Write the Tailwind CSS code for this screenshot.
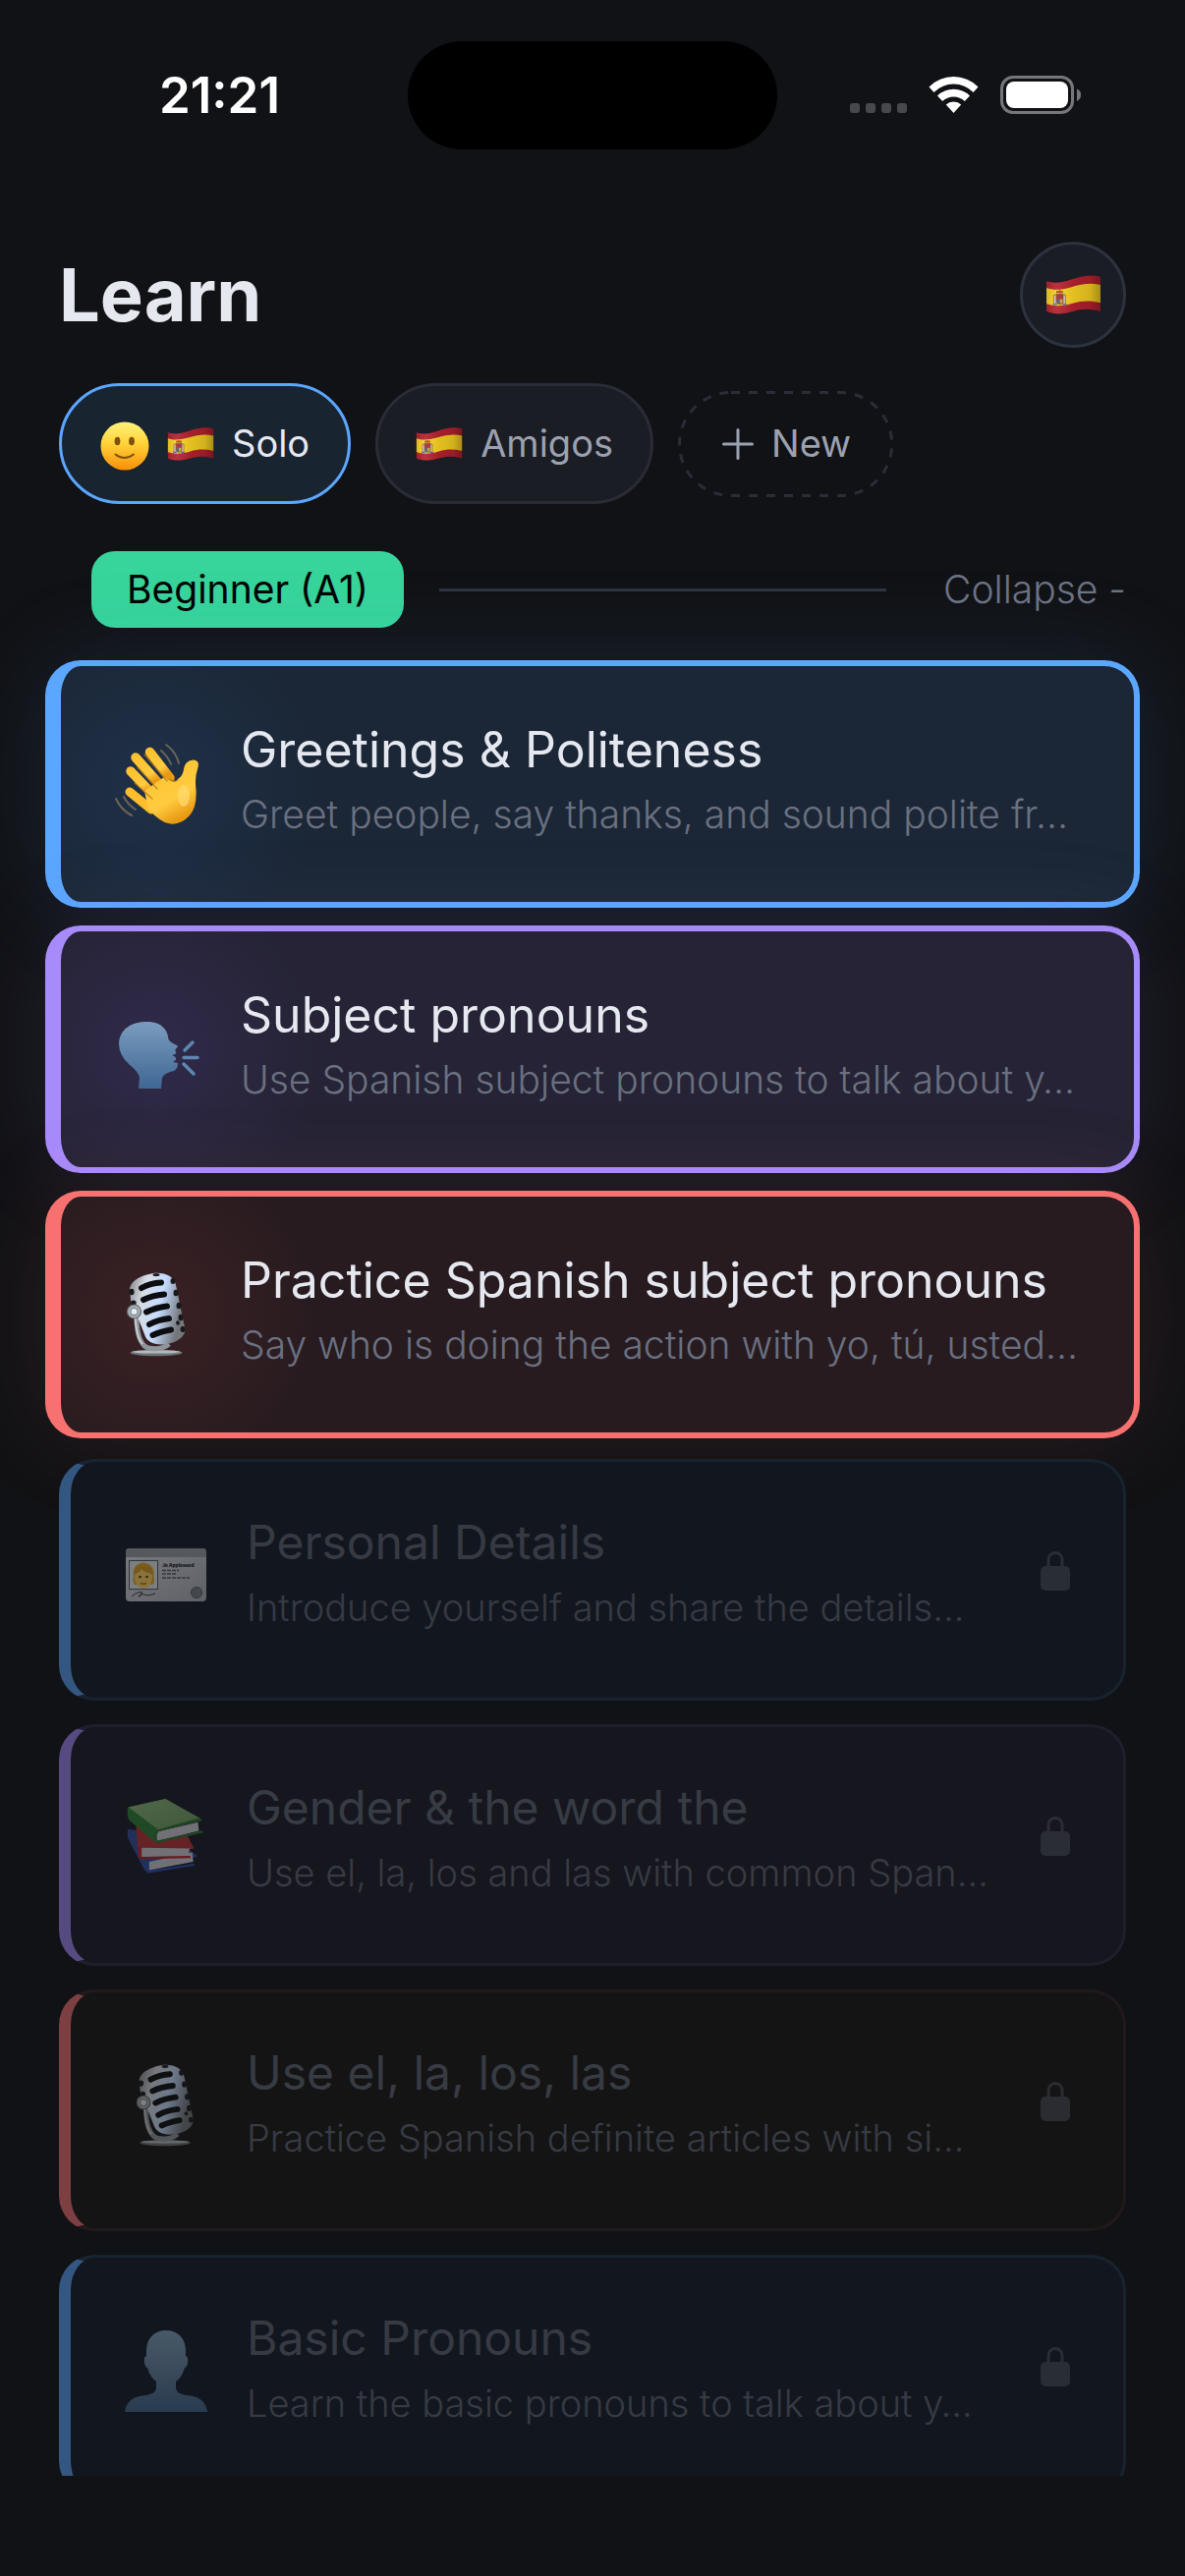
<!DOCTYPE html>
<html lang="en">
<head>
<meta charset="utf-8">
<meta name="viewport" content="width=device-width, initial-scale=1">
<title>Learn</title>
<script src="https://cdn.jsdelivr.net/npm/@tailwindcss/browser@4"></script>
</head>
<body class="flex h-screen flex-col bg-[#111215] pb-[102px] font-[Inter,sans-serif] text-[#e6e8f0]">

<!-- Shared artwork -->
<svg width="0" height="0" class="absolute" aria-hidden="true">
  <defs>
    <linearGradient id="face" x1="0" y1="0" x2="0" y2="1"><stop offset="0" stop-color="#fff27a"/><stop offset=".45" stop-color="#ffd338"/><stop offset="1" stop-color="#f88f08"/></linearGradient>
    <linearGradient id="fold" x1="0" y1="0" x2="1" y2="0"><stop offset="0" stop-color="#000" stop-opacity=".12"/><stop offset=".2" stop-color="#fff" stop-opacity=".08"/><stop offset=".5" stop-color="#000" stop-opacity=".08"/><stop offset=".8" stop-color="#000" stop-opacity=".14"/><stop offset="1" stop-color="#000" stop-opacity=".32"/></linearGradient>
    <linearGradient id="hand" x1="0" y1="0" x2=".5" y2="1"><stop offset="0" stop-color="#ffc22e"/><stop offset=".7" stop-color="#ffcb40"/><stop offset="1" stop-color="#e89a13"/></linearGradient>
    <linearGradient id="blue" x1="0" y1="0" x2="0" y2="1"><stop offset="0" stop-color="#7a9cbe"/><stop offset="1" stop-color="#3f6794"/></linearGradient>
    <linearGradient id="bust" x1="0" y1="0" x2="0" y2="1"><stop offset="0" stop-color="#7d9cb0"/><stop offset=".5" stop-color="#647d96"/><stop offset="1" stop-color="#3f5f80"/></linearGradient>
    <linearGradient id="metal" x1="0" y1="0" x2="1" y2=".3"><stop offset="0" stop-color="#7d8388"/><stop offset=".3" stop-color="#d8dde2"/><stop offset=".62" stop-color="#c5dcff"/><stop offset="1" stop-color="#73777c"/></linearGradient>
    <linearGradient id="card" x1="0" y1="0" x2="1" y2="1"><stop offset="0" stop-color="#dedede"/><stop offset="1" stop-color="#a9a9ab"/></linearGradient>
    <linearGradient id="green" x1="0" y1="0" x2="1" y2="1"><stop offset="0" stop-color="#8bb877"/><stop offset="1" stop-color="#6a9a52"/></linearGradient>
    <clipPath id="flagshape"><path d="M0 5C7 7.500 13 6.500 21 4C31 .5 39 -.8 47 1.500V31.500C39 29 31 29 23 31.500C15 34 7 34.500 0 31.500Z"/></clipPath>
  </defs>
  <symbol id="flag" viewBox="0 0 47 34">
    <g clip-path="url(#flagshape)">
      <rect width="47" height="34" fill="#b3212f"/>
      <path d="M0 11C7 13.500 13 12.500 21 10.500C31 7.500 39 6.500 47 8.500V24C39 22 31 22 23 24.500C15 27 7 27.500 0 25Z" fill="#f6cf22"/>
      <path d="M6.500 17h2v8h-2zM14.500 17h2v8h-2z" fill="#e3d8c8" stroke="#6b4a3a" stroke-width=".6"/>
      <path d="M8.800 16.500h5.400v6q0 2.500-2.700 2.800-2.700-.3-2.700-2.800z" fill="#b02a35" stroke="#7a3b1e" stroke-width=".7"/>
      <path d="M11.600 20.800h2.400v1.800q0 2-2.400 2.400z" fill="#cfa83a"/>
      <path d="M8.800 20.800h2.700v4q-2.700-.5-2.700-2.500z" fill="#4f5a86"/>
      <path d="M8.500 15.500l.3-2.200 1.500.7 1.200-1.500 1.200 1.500 1.500-.7.300 2.200z" fill="#a3472a"/>
      <path d="M5.500 25.500h4M13.500 25.500h4" stroke="#5868a0" stroke-width="1"/>
      <rect width="47" height="34" fill="url(#fold)"/>
    </g>
  </symbol>
  <symbol id="mic" viewBox="0 0 60 86">
    <ellipse cx="29" cy="82" rx="26.500" ry="3.200" fill="#6c7376"/>
    <ellipse cx="29" cy="81" rx="25" ry="1.600" fill="#b4bbbd"/>
    <path d="M8.500 40C9 56 10 68 17 75C22 79 36 79 42 73" fill="none" stroke="#8d959b" stroke-width="5"/>
    <path d="M7.500 42C8 58 10 68 15 73" fill="none" stroke="#d4dade" stroke-width="1.500"/>
    <path d="M2 16C4 8 14 3 26 1C38 0 47 4 49 13L58 56C60 64 52 71 40 73C28 75 19 71 17 63L3 28Z" fill="url(#metal)"/>
    <g stroke="#0c0d10" stroke-width="6" stroke-linecap="round" fill="none">
      <path d="M14 16Q23 11 34 10.500"/><path d="M16 28Q25 23.500 37 22.500"/><path d="M19 40.500Q28 36 40 34.500"/><path d="M22 53Q30 48.500 42 47"/><path d="M25.500 64Q33 60.500 44 58.500"/>
    </g>
    <g fill="#17191c">
      <ellipse cx="4" cy="20" rx="2.600" ry="3.200"/><ellipse cx="6" cy="31" rx="2.600" ry="2.600"/><ellipse cx="29" cy="2.500" rx="3.500" ry="1.500"/><ellipse cx="46" cy="9" rx="2.500" ry="3"/><ellipse cx="49" cy="21" rx="2.500" ry="3.200"/><ellipse cx="52" cy="34" rx="2.500" ry="3.200"/><ellipse cx="54" cy="46" rx="2.500" ry="3.200"/><ellipse cx="56" cy="58" rx="2.500" ry="3"/><ellipse cx="51" cy="51.500" rx="1.800" ry="2.200"/>
    </g>
    <circle cx="6.500" cy="40" r="7" fill="#aab2b8" stroke="#5f676d" stroke-width="1.200"/>
    <circle cx="6.500" cy="40" r="3.600" fill="#e7ecf0" stroke="#7d868c" stroke-width="1.200"/>
  </symbol>
  <symbol id="lock" viewBox="0 0 30 42">
    <path d="M8 18V9.500a7 7 0 0 1 14 0V18" fill="none" stroke="currentColor" stroke-width="3"/>
    <rect x="0" y="16" width="30" height="25" rx="5" fill="currentColor"/>
  </symbol>
</svg>

<!-- Status bar -->
<header class="grid shrink-0 grid-cols-[1fr_376px_1fr] items-center pt-[42px]">
  <p class="pl-8 text-center text-[51px] leading-[60px] font-semibold text-white">21:21</p>
  <div class="h-[110px] rounded-full bg-black"></div>
  <div class="flex justify-center pr-8">
    <svg class="h-[40px] w-[236px]" viewBox="865 78 236 40" aria-hidden="true">
      <g fill="#47484b"><rect x="865" y="106" width="10" height="10" rx="3"/><rect x="881" y="106" width="10" height="10" rx="3"/><rect x="897" y="106" width="10" height="10" rx="3"/><rect x="913" y="106" width="10" height="10" rx="3"/></g>
      <g fill="#fff">
        <path d="M945.500 89.500Q956 79 970.500 79Q985 79 995.500 89.500L990.500 95Q982 86.500 970.500 86.500Q959 86.500 950.500 95Z"/>
        <path d="M954 98.500Q961 91.800 970.500 91.800Q980 91.800 987 98.500L981.800 104Q977 99.500 970.500 99.500Q964 99.500 959.200 104Z"/>
        <path d="M962.800 107.500Q966 104.500 970.500 104.500Q975 104.500 978.200 107.500L970.500 116Z"/>
      </g>
      <rect x="1019.500" y="79.500" width="72" height="36" rx="11.500" fill="none" stroke="#76777a" stroke-width="3"/>
      <rect x="1024" y="84" width="63" height="27" rx="8" fill="#fff"/>
      <path d="M1096 91.500Q1100 93 1100 97.500T1096 104Z" fill="#76777a"/>
    </svg>
  </div>
</header>

<main class="min-h-0 flex-1 overflow-y-auto px-[60px] pt-[94px] [scrollbar-width:none]">
  <div class="flex h-[108px] items-center justify-between">
    <h1 class="text-[74px] leading-[90px] font-bold">Learn</h1>
    <button type="button" aria-label="Spanish" class="grid size-[108px] place-items-center rounded-full border-3 border-[#2d3240] bg-[#1a1d24]">
      <svg class="h-[40px] w-[55px]"><use href="#flag"/></svg>
    </button>
  </div>

  <nav class="mt-9 flex items-center gap-[25px] text-[38px] font-normal" aria-label="Courses">
    <button type="button" class="flex h-[123px] items-center gap-[18px] rounded-full border-3 border-[#5ba6ff] bg-[#192431] px-[39px]">
      <svg class="mt-1 size-[50px]" viewBox="0 0 50 50" aria-hidden="true">
        <circle cx="25" cy="25" r="24.500" fill="url(#face)"/>
        <ellipse cx="17.500" cy="20" rx="2.900" ry="4.300" fill="#80500c"/><ellipse cx="32" cy="20" rx="2.900" ry="4.300" fill="#80500c"/>
        <path d="M15.500 33.500Q24.500 40.500 34 33.500" fill="none" stroke="#80500c" stroke-width="2" stroke-linecap="round"/>
      </svg>
      <svg class="h-[34px] w-[48px]" aria-hidden="true"><use href="#flag"/></svg>
      Solo
    </button>
    <button type="button" class="flex h-[123px] items-center gap-[18px] rounded-full border-3 border-[#292c37] bg-[#1a1d24] px-[38px] text-[#9ba1b0]">
      <svg class="h-[34px] w-[48px]" aria-hidden="true"><use href="#flag"/></svg>
      Amigos
    </button>
    <button type="button" class="relative flex h-[108px] items-center gap-4 px-[43px] text-[#9ba1b0]">
      <svg class="absolute inset-0 size-full" aria-hidden="true"><rect x="1.500" y="1.500" width="100%" height="105" rx="52.500" class="w-[calc(100%-3px)]" fill="none" stroke="#2a2d38" stroke-width="3" stroke-dasharray="9 9"/></svg>
      <svg class="size-9" viewBox="0 0 36 36" fill="none" stroke="currentColor" stroke-width="3" stroke-linecap="round" aria-hidden="true"><path d="M18 3.500v29M3.500 18h29"/></svg>
      New
    </button>
  </nav>

  <section class="mt-12">
    <div class="flex items-center pl-[33px]">
      <h2 class="rounded-3xl bg-[#37d49b] px-9 text-[39px] leading-[78px] font-normal text-black">Beginner (A1)</h2>
      <div class="mr-[58px] ml-9 h-[3px] flex-1 bg-[#2f3441]"></div>
      <button type="button" class="text-[39px] leading-[78px] font-light text-[#6d7383]">Collapse -</button>
    </div>

    <ul class="mt-9 flex flex-col gap-6">
      <li class="-mx-[14px] -my-[3px]">
        <button type="button" class="flex h-[252px] w-full items-center gap-[42px] rounded-[36px] border-6 border-l-16 border-[#5ba6ff] bg-[#1b2736] bg-[radial-gradient(circle_at_95px_120px,#1f3049,transparent_170px)] pl-[55px] text-left shadow-[0_0_100px_#5ba6ff20]">
          <svg class="size-[86px] shrink-0" viewBox="0 0 86 86" aria-hidden="true">
            <g fill="none" stroke="#6b6355" stroke-width="2" stroke-linecap="round"><path d="M52 3Q62 10 65 22M47 9Q54 15 57 23M1 58Q6 69 17 75M9 56Q13 64 21 69"/></g>
            <g fill="none" stroke="url(#hand)" stroke-linecap="round" stroke-width="9.500"><path d="M16 30L38 53"/><path d="M21 16L46 44"/><path d="M35.500 10.500L56 37"/></g>
            <path d="M15 51L37 69" fill="none" stroke="#fdbd2d" stroke-width="9" stroke-linecap="round"/>
            <path d="M30 50L50 36Q60 44 64 38Q69 35 70 28Q71 19 80 18.500Q87 19 84 28Q81 36 82.500 49Q83.500 67 76 75Q66 86 54 83Q47 82 34 69Z" fill="url(#hand)"/>
            <ellipse cx="70" cy="55" rx="6" ry="11" fill="#ffe07a" opacity=".6"/>
            <g fill="none" stroke="#b07a1c" stroke-width="1.500" stroke-linecap="round" opacity=".75"><path d="M20 42L38 58M23 26L43 48M30 13L53 40M64 39Q60 42 56 38"/></g>
          </svg>
          <span class="flex flex-col pb-1 whitespace-nowrap">
            <span class="text-[50px] leading-[66px] font-normal">Greetings &amp; Politeness</span>
            <span class="text-[39px] leading-[66px] font-light text-[#6a7080]">Greet people, say thanks, and sound polite fr…</span>
          </span>
        </button>
      </li>
      <li class="-mx-[14px] -my-[3px]">
        <button type="button" class="flex h-[252px] w-full items-center gap-[42px] rounded-[36px] border-6 border-l-16 border-[#a78bfa] bg-[#252335] bg-[radial-gradient(circle_at_95px_120px,#302a4a,transparent_170px)] pl-[55px] text-left shadow-[0_0_100px_#a78bfa1c]">
          <svg class="size-[86px] shrink-0" viewBox="0 -5 86 86" aria-hidden="true">
            <path d="M33 10C48 10 54 19 54.500 28Q56 31 63 34Q65 35.500 62 37.500Q60.500 39 62.500 42Q60 44 58 44Q63 46 62 49Q56 51 64 52Q64 58 60 60Q50 62 48 67L47 78H24L25 67Q24 61 14 53Q4 44 4 32C5 17 17 10 33 10Z" fill="url(#blue)"/>
            <path d="M71 39L79 31M70 46.500H84M70 53L80 63" fill="none" stroke="#5d86b2" stroke-width="3.500" stroke-linecap="round"/>
          </svg>
          <span class="flex flex-col pb-1 whitespace-nowrap">
            <span class="text-[50px] leading-[66px] font-normal">Subject pronouns</span>
            <span class="text-[39px] leading-[66px] font-light text-[#6a7080]">Use Spanish subject pronouns to talk about y…</span>
          </span>
        </button>
      </li>
      <li class="-mx-[14px] -my-[3px]">
        <button type="button" class="flex h-[252px] w-full items-center gap-[42px] rounded-[36px] border-6 border-l-16 border-[#f87171] bg-[#271b1f] bg-[radial-gradient(circle_at_95px_120px,#3b2124,transparent_170px)] pl-[55px] text-left shadow-[0_0_100px_#f871711c]">
          <svg class="size-[86px] shrink-0" aria-hidden="true"><use href="#mic"/></svg>
          <span class="flex flex-col pb-1 whitespace-nowrap">
            <span class="text-[50px] leading-[66px] font-normal">Practice Spanish subject pronouns</span>
            <span class="text-[39px] leading-[66px] font-light text-[#6a7080]">Say who is doing the action with yo, tú, usted…</span>
          </span>
        </button>
      </li>
      <li>
        <button type="button" disabled class="flex h-[246px] w-full items-center gap-10 rounded-[36px] border-3 border-l-12 border-[#182330] border-l-[#335780] bg-[#12171f] pr-[54px] pb-[10px] pl-[55px] text-left text-[#373a43]">
          <svg class="size-[84px] shrink-0 opacity-50" viewBox="0 0 84 84" aria-hidden="true">
            <rect x="1" y="15" width="82" height="54" rx="4" fill="url(#card)"/>
            <path d="M1 24V19q0-4 4-4h74q4 0 4 4v5z" fill="#98999b"/>
            <rect x="4.500" y="27.500" width="29" height="29" fill="#e4e4e4" stroke="#555" stroke-width="1"/>
            <path d="M9 44Q7 31 19 29.500Q31 31 29.500 44Q31 49 28 52H10Q7 48 9 44Z" fill="#e3a51b"/>
            <ellipse cx="19" cy="45" rx="9" ry="10.500" fill="#ffcf52"/>
            <path d="M10 41Q10 33 19 33Q28 33 28 41Q20 40 17 36Q15 40 10 41Z" fill="#d9971a"/>
            <circle cx="15.500" cy="44" r="1.300" fill="#54340d"/><circle cx="22.500" cy="44" r="1.300" fill="#54340d"/><path d="M16 50.500Q19 52 22 50.500" stroke="#8a4a1c" stroke-width="1.200" fill="none"/>
            <text x="38" y="33.500" font-size="4.800" font-weight="800" fill="#111">Jo Appleseed</text>
            <path d="M38 37.500h17M38 41h14M38 45h28" stroke="#555" stroke-width="1.500" stroke-dasharray="4 1"/>
            <path d="M7 64Q14 58 18 60Q12 65 15 64Q18 60 20 62Q22 64 31 61" fill="none" stroke="#333" stroke-width="1"/>
            <circle cx="73" cy="60" r="5.500" fill="#777" stroke="#555" stroke-width="1"/>
          </svg>
          <span class="flex flex-1 flex-col whitespace-nowrap">
            <span class="text-[48px] leading-[66px] font-normal">Personal Details</span>
            <span class="text-[38px] leading-[66px] font-light">Introduce yourself and share the details…</span>
          </span>
          <svg class="mb-2 h-[42px] w-[30px] shrink-0 text-[#292d35]" role="img" aria-label="Locked"><use href="#lock"/></svg>
        </button>
      </li>
      <li>
        <button type="button" disabled class="flex h-[246px] w-full items-center gap-10 rounded-[36px] border-3 border-l-12 border-[#1f1e2d] border-l-[#574a80] bg-[#16161f] pr-[54px] pb-[10px] pl-[55px] text-left text-[#373b43]">
          <svg class="size-[84px] shrink-0 opacity-50" viewBox="2 4 88 88" aria-hidden="true">
            <path d="M5 36L52 45L80 65L27 82Q24 82 22 78L5 45Z" fill="#2c4a94"/>
            <path d="M28 71L74 61L75 71L28 80Z" fill="#c9cacc"/>
            <path d="M26 71Q24 76 27 82L76 74" fill="none" stroke="#2b4ba6" stroke-width="2.500"/>
            <path d="M14 33L68 42L76 57L20 66Q17 66 16 62Z" fill="#b5302c"/>
            <path d="M20 56L71 57L70 65L20 66Z" fill="#c9cacc"/>
            <path d="M18 55Q16 61 19 67L72 66" fill="none" stroke="#b5201f" stroke-width="2.500"/>
            <path d="M5 13L46 4L85 27L38 38L34 50L7 27Q4 24 5 13Z" fill="#2b7d2c"/>
            <path d="M6 13L45 4L83 25L38 37Z" fill="url(#green)"/>
            <path d="M36 39L80 29L81 38L36 49Z" fill="#c9cacc"/>
            <path d="M83 25L37 38Q33 44 36 50L85 39" fill="none" stroke="#2b7228" stroke-width="2.500"/>
          </svg>
          <span class="flex flex-1 flex-col whitespace-nowrap">
            <span class="text-[48px] leading-[66px] font-normal">Gender &amp; the word the</span>
            <span class="text-[38px] leading-[66px] font-light">Use el, la, los and las with common Span…</span>
          </span>
          <svg class="mb-2 h-[42px] w-[30px] shrink-0 text-[#2b2d35]" role="img" aria-label="Locked"><use href="#lock"/></svg>
        </button>
      </li>
      <li>
        <button type="button" disabled class="flex h-[246px] w-full items-center gap-10 rounded-[36px] border-3 border-l-12 border-[#22191c] border-l-[#7d3f41] bg-[#141415] pr-[54px] pb-[10px] pl-[55px] text-left text-[#373b43]">
          <svg class="size-[84px] shrink-0 opacity-50" aria-hidden="true"><use href="#mic"/></svg>
          <span class="flex flex-1 flex-col whitespace-nowrap">
            <span class="text-[48px] leading-[66px] font-normal">Use el, la, los, las</span>
            <span class="text-[38px] leading-[66px] font-light">Practice Spanish definite articles with si…</span>
          </span>
          <svg class="mb-2 h-[42px] w-[30px] shrink-0 text-[#2a2c31]" role="img" aria-label="Locked"><use href="#lock"/></svg>
        </button>
      </li>
      <li>
        <button type="button" disabled class="flex h-[246px] w-full items-center gap-10 rounded-[36px] border-3 border-l-12 border-[#182330] border-l-[#335780] bg-[#12171f] pr-[54px] pb-[10px] pl-[55px] text-left text-[#373a43]">
          <svg class="size-[84px] shrink-0 opacity-50" viewBox="0 0 84 84" aria-hidden="true">
            <path d="M42 1C54 1 62 9 62 22V27Q65 28 64 34Q63 39 61 39Q58 49 52 53V60Q52 65 62 67Q82 68 84 84H0Q2 68 22 67Q32 65 32 60V53Q26 49 23 39Q21 39 20 34Q19 28 22 27V22C22 9 30 1 42 1Z" fill="url(#bust)"/>
          </svg>
          <span class="flex flex-1 flex-col whitespace-nowrap">
            <span class="text-[48px] leading-[66px] font-normal">Basic Pronouns</span>
            <span class="text-[38px] leading-[66px] font-light">Learn the basic pronouns to talk about y…</span>
          </span>
          <svg class="mb-2 h-[42px] w-[30px] shrink-0 text-[#292d35]" role="img" aria-label="Locked"><use href="#lock"/></svg>
        </button>
      </li>
    </ul>
  </section>
</main>
</body>
</html>
